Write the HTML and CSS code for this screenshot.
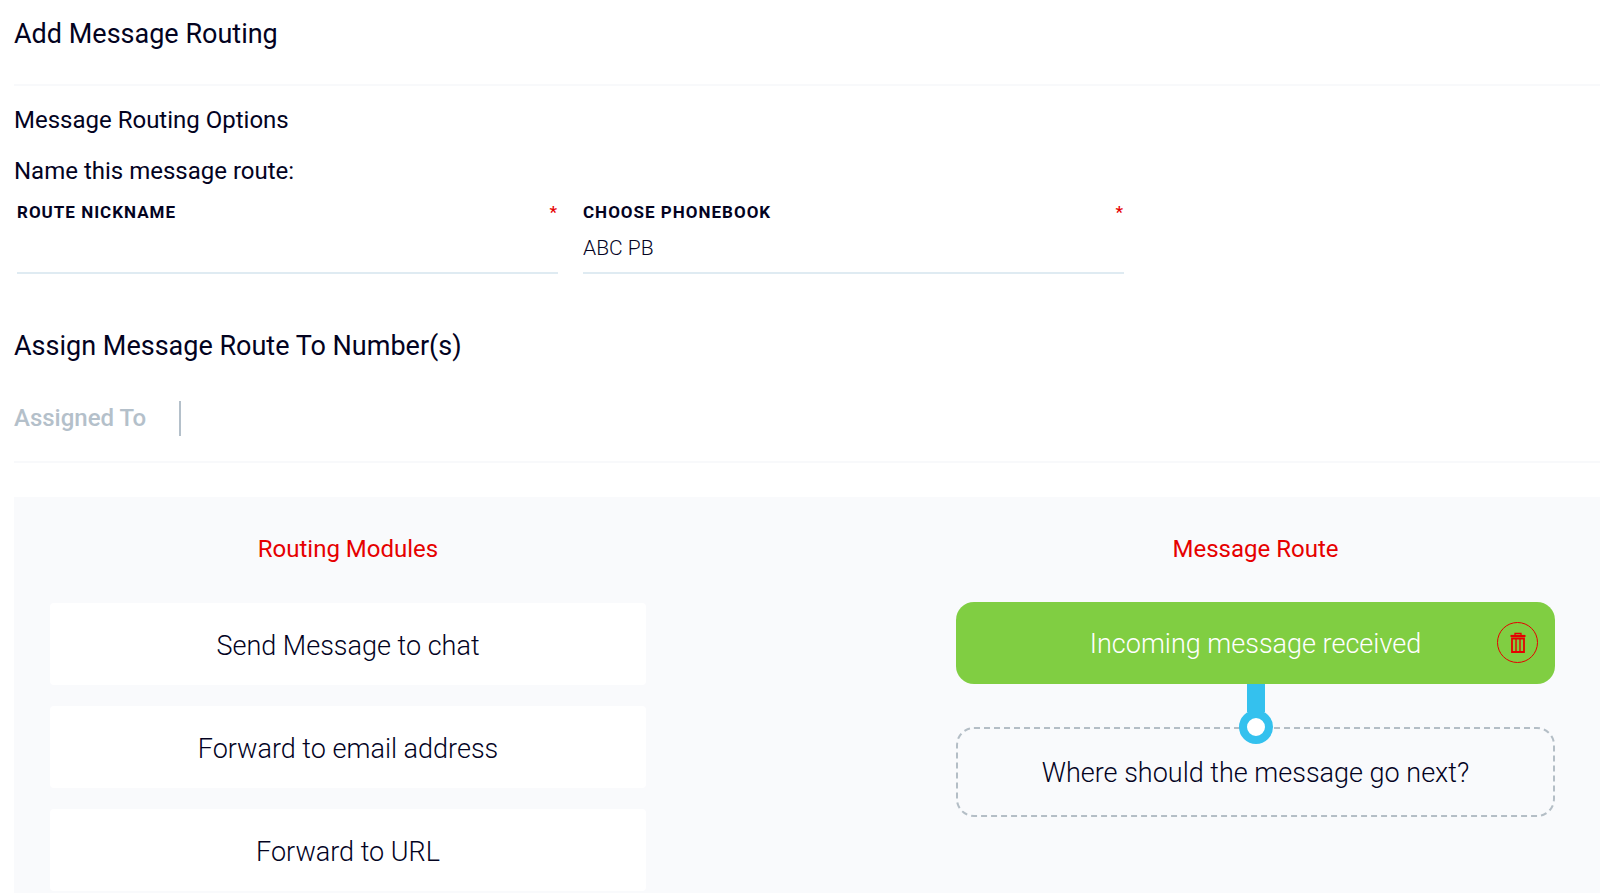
FILE: index.html
```
<!DOCTYPE html>
<html lang="en">
<head>
    <meta charset="UTF-8">
    <meta name="viewport" content="width=device-width, initial-scale=1.0">
    <title>Add Message Routing</title>
    <link rel="stylesheet" href="styles.css">
</head>
<body>
    <header class="page-header">
        <h1>Add Message Routing</h1>
    </header>

    <main>
        <form class="route-form">
            <h2>Message Routing Options</h2>
            <p class="intro">Name this message route:</p>

            <div class="fields">
                <div class="field">
                    <label for="routeNickname">ROUTE NICKNAME <span class="required">*</span></label>
                    <input type="text" id="routeNickname" required>
                </div>
                <div class="field">
                    <label for="phonebook">CHOOSE PHONEBOOK <span class="required">*</span></label>
                    <select id="phonebook" required>
                        <option value="abc">ABC PB</option>
                    </select>
                </div>
            </div>
        </form>

        <section class="assign">
            <h2 class="assign-title">Assign Message Route To Number(s)</h2>
            <div class="assigned-to">Assigned To</div>
        </section>

        <section class="builder">
            <div class="modules">
                <h3>Routing Modules</h3>
                <ul class="module-list">
                    <li><button type="button" class="module">Send Message to chat</button></li>
                    <li><button type="button" class="module">Forward to email address</button></li>
                    <li><button type="button" class="module">Forward to URL</button></li>
                </ul>
            </div>

            <div class="route">
                <h3>Message Route</h3>
                <div class="step">
                    <span>Incoming message received</span>
                    <button type="button" class="delete-btn" aria-label="Delete step">
                        <svg width="16" height="22" viewBox="0 0 16 22" fill="none" stroke="currentColor">
                            <path d="M5 3V1.5h6V3" stroke-width="1.3"/>
                            <path d="M0.5 4h15" stroke-width="2.2"/>
                            <path d="M2 6.5h12v13.5h-12z" stroke-width="1.8"/>
                            <path d="M6 7v12M10 7v12" stroke-width="1.4"/>
                        </svg>
                    </button>
                </div>
                <div class="drop-zone">
                    <span class="connector"></span>
                    Where should the message go next?
                </div>
            </div>
        </section>
    </main>
</body>
</html>
```
FILE: styles.css
```
* {
    box-sizing: border-box;
}
body {
    font-family: Roboto, Arial, sans-serif;
    margin: 0;
    min-height: 100vh;
    display: flex;
    flex-direction: column;
    color: #03031f;
    background-color: #fff;
}
h1, h2, h3, p, ul {
    margin: 0;
    padding: 0;
    font-weight: 400;
}

/* Header */
.page-header {
    margin-left: 14px;
    padding: 17px 0 33px;
    border-bottom: 2px solid #f8f9fb;
}
h1 {
    font-size: 27px;
    line-height: 34px;
}

main {
    flex: 1;
    display: flex;
    flex-direction: column;
}

/* Route options */
.route-form {
    padding: 17px 0 0 14px;
}
h2, .intro {
    font-size: 24px;
    line-height: 34px;
}
.intro {
    margin-top: 17px;
}
.fields {
    display: grid;
    grid-template-columns: 541fr 541fr 451fr;
    gap: 25px;
    padding: 14px 0 0 3px;
}
.field label {
    display: flex;
    justify-content: space-between;
    font-size: 17px;
    line-height: 20px;
    font-weight: 700;
    letter-spacing: 1px;
}
.required {
    color: #e60000;
    font-weight: 500;
}
.field input, .field select {
    display: block;
    width: 100%;
    height: 52px;
    padding: 2px 0 0;
    border: none;
    border-bottom: 2px solid #dfebf2;
    border-radius: 0;
    outline: none;
    appearance: none;
    background: none;
    font-family: inherit;
    font-size: 21px;
    font-weight: 300;
    color: inherit;
}

/* Assigned numbers */
.assign {
    margin-left: 14px;
    padding: 55px 0 25px;
    border-bottom: 2px solid #f8f9fb;
}
.assign-title {
    font-size: 27px;
}
.assigned-to {
    width: fit-content;
    margin-top: 38px;
    padding-right: 33px;
    border-right: 2px solid #b4c0ca;
    font-size: 24px;
    line-height: 35px;
    font-weight: 500;
    color: #b4c0ca;
}

/* Route builder */
.builder {
    flex: 1;
    display: grid;
    grid-template-columns: 596fr 599fr;
    gap: 310px;
    margin: 34px 0 0 14px;
    padding: 35px 45px 0 36px;
    background-color: #f9fafc;
    text-align: center;
}
h3 {
    font-size: 24px;
    line-height: 34px;
    color: #e60000;
}
.module-list {
    list-style-type: none;
    display: flex;
    flex-direction: column;
    gap: 21px;
    margin-top: 37px;
}
.module {
    display: block;
    width: 100%;
    height: 82px;
    padding: 4px 0 0;
    border: none;
    border-radius: 4px;
    background-color: #fff;
    font-family: inherit;
    font-size: 27px;
    font-weight: 300;
    color: inherit;
    cursor: pointer;
}
.step {
    position: relative;
    display: flex;
    align-items: center;
    justify-content: center;
    height: 82px;
    margin-top: 36px;
    padding-top: 2px;
    border-radius: 18px;
    background-color: #80ce42;
    color: #fff;
    font-size: 27px;
    font-weight: 300;
}
.delete-btn {
    position: absolute;
    top: 20px;
    right: 17px;
    display: flex;
    align-items: center;
    justify-content: center;
    width: 41px;
    height: 41px;
    padding: 0;
    border: 1px solid #e60000;
    border-radius: 50%;
    background: none;
    color: #e60000;
    cursor: pointer;
}
.drop-zone {
    position: relative;
    display: flex;
    align-items: center;
    justify-content: center;
    height: 90px;
    margin-top: 43px;
    padding-top: 2px;
    border: 2px dashed #b4bec6;
    border-radius: 18px;
    font-size: 27px;
    font-weight: 300;
}

/* Blue line and ring joining the steps */
.connector {
    position: absolute;
    bottom: 71px;
    left: calc(50% - 17px);
    width: 34px;
    height: 34px;
    border: 8px solid #34c1ee;
    border-radius: 50%;
    background-color: #fff;
}
.connector::before {
    content: "";
    position: absolute;
    bottom: 24px;
    left: 0;
    width: 18px;
    height: 28px;
    background-color: #34c1ee;
}
```
